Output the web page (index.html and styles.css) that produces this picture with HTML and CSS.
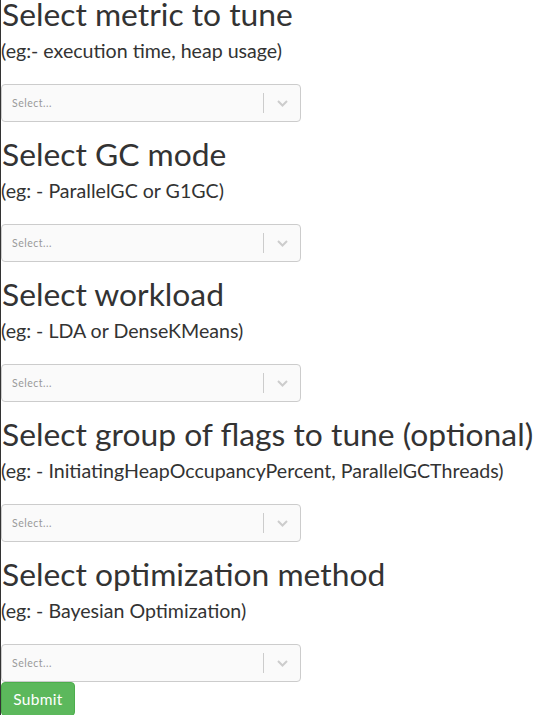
FILE: index.html
```html
<!DOCTYPE html>
<html>
<head>
<meta charset="utf-8">
<link rel="stylesheet" href="styles.css">
</head>
<body>
<div class="page">
  <div class="field">
    <h3 class="title">Select metric to tune</h3>
    <p class="hint">(eg:- execution time, heap usage)</p>
    <div class="select"><span class="ph">Select...</span><span class="sep"></span><span class="arrow"><svg width="11" height="7" viewBox="0 0 11 7"><path d="M1 1 L5.5 5.5 L10 1" fill="none" stroke="#ccc" stroke-width="2"/></svg></span></div>
  </div>
  <div class="field">
    <h3 class="title">Select GC mode</h3>
    <p class="hint">(eg: - ParallelGC or G1GC)</p>
    <div class="select"><span class="ph">Select...</span><span class="sep"></span><span class="arrow"><svg width="11" height="7" viewBox="0 0 11 7"><path d="M1 1 L5.5 5.5 L10 1" fill="none" stroke="#ccc" stroke-width="2"/></svg></span></div>
  </div>
  <div class="field">
    <h3 class="title">Select workload</h3>
    <p class="hint">(eg: - LDA or DenseKMeans)</p>
    <div class="select"><span class="ph">Select...</span><span class="sep"></span><span class="arrow"><svg width="11" height="7" viewBox="0 0 11 7"><path d="M1 1 L5.5 5.5 L10 1" fill="none" stroke="#ccc" stroke-width="2"/></svg></span></div>
  </div>
  <div class="field">
    <h3 class="title">Select group of flags to tune (optional)</h3>
    <p class="hint">(eg: - InitiatingHeapOccupancyPercent, ParallelGCThreads)</p>
    <div class="select"><span class="ph">Select...</span><span class="sep"></span><span class="arrow"><svg width="11" height="7" viewBox="0 0 11 7"><path d="M1 1 L5.5 5.5 L10 1" fill="none" stroke="#ccc" stroke-width="2"/></svg></span></div>
  </div>
  <div class="field">
    <h3 class="title">Select optimization method</h3>
    <p class="hint">(eg: - Bayesian Optimization)</p>
    <div class="select"><span class="ph">Select...</span><span class="sep"></span><span class="arrow"><svg width="11" height="7" viewBox="0 0 11 7"><path d="M1 1 L5.5 5.5 L10 1" fill="none" stroke="#ccc" stroke-width="2"/></svg></span></div>
  </div>
  <button class="submit">Submit</button>
</div>
</body>
</html>
```
FILE: styles.css
```css
html, body {
  margin: 0;
  padding: 0;
  background: #fff;
}
body {
  font-family: Lato, "Open Sans", sans-serif;
  color: #333;
  border-left: 1px solid #333;
  min-height: 715px;
  box-sizing: border-box;
}
.page {
  display: flex;
  flex-direction: column;
  align-items: flex-start;
  gap: 18px;
}
.field {
  width: 100%;
}
.title {
  margin: 0;
  font-size: 31.8px;
  line-height: 29px;
  font-weight: 400;
  padding-left: 1px;
  white-space: nowrap;
}
.hint {
  margin: 10px 0 0;
  font-size: 19.6px;
  line-height: 24px;
  white-space: nowrap;
}
.select {
  margin-top: 21px;
  width: 300px;
  height: 38px;
  box-sizing: border-box;
  border: 1px solid #ccc;
  border-radius: 4px;
  background: #fafafa;
  display: flex;
  align-items: center;
}
.ph {
  flex: 1;
  padding-left: 10px;
  font-size: 10.5px;
  color: #999;
  letter-spacing: 0.5px;
}
.sep {
  width: 1px;
  height: 20px;
  background: #ccc;
}
.arrow {
  width: 36px;
  display: flex;
  justify-content: center;
  align-items: center;
}
.arrow svg {
  display: block;
}
.submit {
  margin-top: -18px;
  width: 74px;
  height: 34px;
  border: 1px solid #4cae4c;
  border-radius: 4px;
  background: #5cb85c;
  color: #fff;
  font-family: Lato, sans-serif;
  font-size: 15.5px;
  letter-spacing: 0.3px;
  padding: 0;
}
```
